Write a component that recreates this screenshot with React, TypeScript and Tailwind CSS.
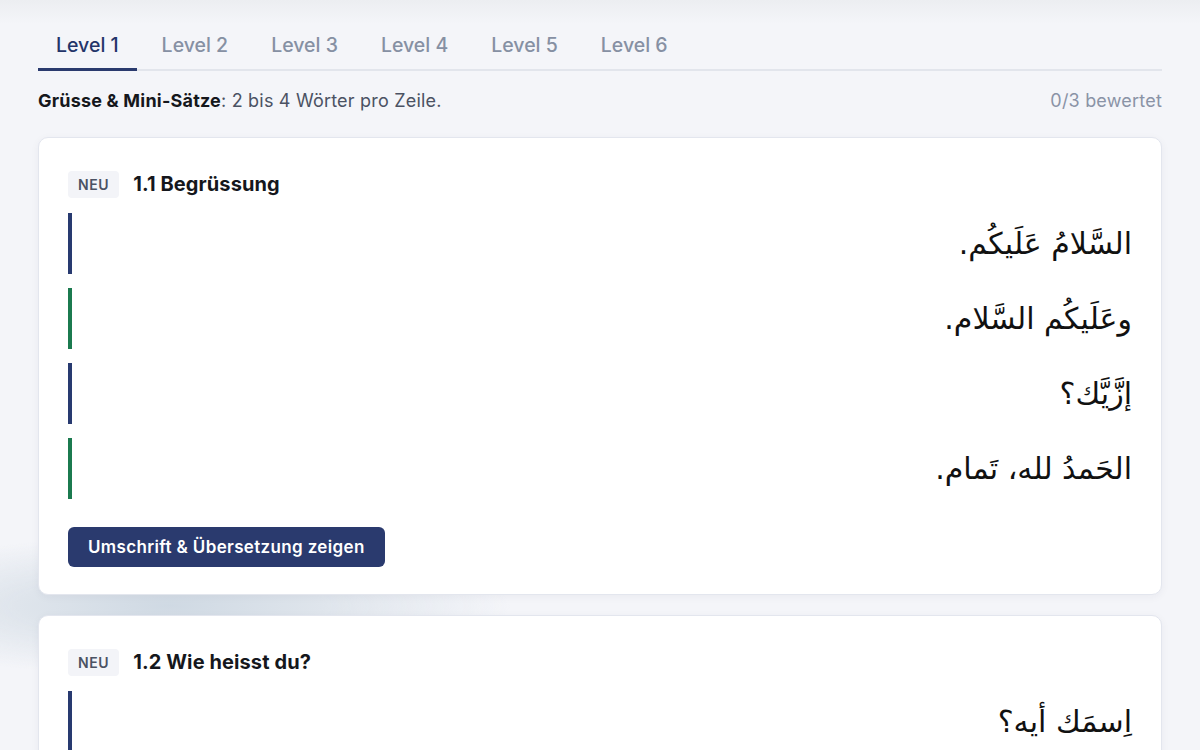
import { useState } from 'react'

type Line = { text: string; speaker: 'a' | 'b' }

interface Lesson {
  id: string
  title: string
  lines: Line[]
}

const levels = ['Level 1', 'Level 2', 'Level 3', 'Level 4', 'Level 5', 'Level 6']

const lessons: Lesson[] = [
  {
    id: '1.1',
    title: 'Begrüssung',
    lines: [
      { text: 'السَّلامُ عَلَيكُم.', speaker: 'a' },
      { text: 'وعَلَيكُم السَّلام.', speaker: 'b' },
      { text: 'إزَّيَّك؟', speaker: 'a' },
      { text: 'الحَمدُ لله، تَمام.', speaker: 'b' },
    ],
  },
  {
    id: '1.2',
    title: 'Wie heisst du?',
    lines: [
      { text: 'اِسمَك أيه؟', speaker: 'a' },
      { text: 'اِسمي سارة.', speaker: 'b' },
    ],
  },
]

const sans = { fontFamily: 'Inter, "Open Sans", "Liberation Sans", sans-serif' }
const arabic = { fontFamily: '"DejaVu Sans", "Noto Sans", sans-serif' }

function LessonCard({ lesson }: { lesson: Lesson }) {
  const [open, setOpen] = useState(false)

  return (
    <div className="rounded-[10px] border border-[#e3e6ee] bg-white px-[29px] pt-[31px] pb-[27px] shadow-[0_2px_8px_rgba(30,40,70,0.05)]">
      <div className="flex items-center gap-[14px]">
        <span className="rounded-[4px] bg-[#f3f4f8] px-[10px] py-[5px] text-[14px] font-semibold leading-[17px] tracking-[0.6px] text-[#4b5263]">
          NEU
        </span>
        <h3 className="text-[20px] font-bold tracking-[0.1px] text-[#15171c]">
          {lesson.id} {lesson.title}
        </h3>
      </div>

      <div className="mt-[14px] flex flex-col gap-[14px]">
        {lesson.lines.map((line, i) => (
          <div
            key={i}
            className={`flex h-[61px] items-center justify-end border-l-4 ${
              line.speaker === 'a' ? 'border-[#283a70]' : 'border-[#1b7a4f]'
            }`}
          >
            <p dir="rtl" style={arabic} className="text-[30px] leading-none text-[#111]">
              {line.text}
            </p>
          </div>
        ))}
      </div>

      <button
        onClick={() => setOpen(!open)}
        className="mt-[28px] rounded-[6px] bg-[#2a3a6e] px-[20px] py-[9px] text-[17px] font-semibold leading-[22px] tracking-[0.35px] text-white"
      >
        Umschrift &amp; Übersetzung {open ? 'verbergen' : 'zeigen'}
      </button>
    </div>
  )
}

export default function App() {
  const [active, setActive] = useState(0)

  return (
    <div
      style={sans}
      className="min-h-screen bg-[#f4f5f9] bg-[radial-gradient(ellipse_340px_70px_at_170px_606px,#cfd9e3_0%,#dfe5ec_45%,rgba(244,245,249,0)_100%),linear-gradient(180deg,#eceef1_0px,#f4f5f9_24px,#f4f5f9_100%)]"
    >
      <div className="px-[38px] pt-[31px]">
        <nav className="flex gap-[7px] border-b-2 border-[#e2e5ec]">
          {levels.map((label, i) => (
            <button
              key={label}
              onClick={() => setActive(i)}
              className={`-mb-[2px] border-b-[3px] px-[18px] pb-[8px] text-[19.5px] font-medium ${
                i === active
                  ? 'border-[#2a3a6e] text-[#233469]'
                  : 'border-transparent text-[#8690a3]'
              }`}
            >
              {label}
            </button>
          ))}
        </nav>

        <div className="mt-[18px] flex items-center justify-between text-[18px] leading-[24px] tracking-[0.2px]">
          <p className="text-[#4b5263]">
            <span className="font-bold text-[#15171c]">Grüsse &amp; Mini-Sätze</span>: 2 bis 4 Wörter pro Zeile.
          </p>
          <span className="text-[#8a93a6]">0/3 bewertet</span>
        </div>

        <div className="mt-[24px] flex flex-col gap-[20px]">
          {lessons.map((lesson) => (
            <LessonCard key={lesson.id} lesson={lesson} />
          ))}
        </div>
      </div>
    </div>
  )
}
